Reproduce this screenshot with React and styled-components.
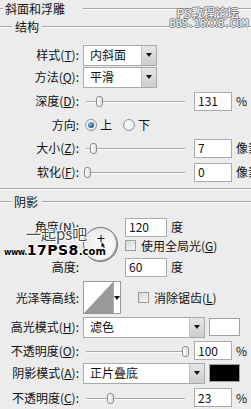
import React from 'react';
import styled, { createGlobalStyle } from 'styled-components';

const Global = createGlobalStyle`
  *, *::before, *::after { box-sizing: border-box; }
  html, body { margin: 0; padding: 0; background: #ececec; }
  body { width: 251px; height: 409px; overflow: hidden; }
  #root { width: 251px; height: 409px; }
`;

const Panel = styled.div`
  position: relative;
  width: 251px;
  height: 409px;
  overflow: hidden;
  background: #ececec;
  font-family: "Noto Sans CJK SC", "Noto Sans", sans-serif;
  font-size: 12px;
  color: #111;
  display: flex;
  flex-direction: column;
`;

const Header = styled.div`
  display: flex;
  align-items: center;
  flex: none;
  height: ${p => p.$h}px;
  margin-top: ${p => p.$mt || 0}px;
`;

const Rule = styled.div`
  height: 2px;
  border-top: 1px solid #a6a6a6;
  border-bottom: 1px solid #fbfbfb;
  flex: ${p => (p.$w ? 'none' : '1')};
  width: ${p => (p.$w ? `${p.$w}px` : 'auto')};
`;

const HeaderText = styled.span`
  padding: 0 ${p => p.$pr}px 0 ${p => p.$pl}px;
  line-height: 1;
  white-space: nowrap;
`;

const Separator = styled.div`
  flex: none;
  margin-top: 4px;
  height: 2px;
  border-top: 1px solid #a3a3a3;
  border-bottom: 1px solid #fbfbfb;
`;

const Row = styled.div`
  display: flex;
  align-items: center;
  flex: none;
  height: ${p => p.$h}px;
  margin-top: ${p => p.$mt || 0}px;
`;

const Label = styled.span`
  flex: none;
  width: 83px;
  padding-right: 4px;
  text-align: right;
  white-space: nowrap;
  line-height: 1;
`;

const Select = styled.div`
  flex: none;
  display: flex;
  width: ${p => p.$w}px;
  height: 21px;
  border: 1px solid #a9a9a9;
  background: #fff;
`;

const SelectText = styled.span`
  flex: 1;
  display: flex;
  align-items: center;
  padding-left: 6px;
  line-height: 1;
`;

const SelectButton = styled.span`
  flex: none;
  width: 15px;
  display: flex;
  align-items: center;
  justify-content: center;
  border-left: 1px solid #c2c2c2;
  background: linear-gradient(#e6e6e6, #cdcdcd);
  &::after {
    content: '';
    border-left: 3px solid transparent;
    border-right: 3px solid transparent;
    border-top: 4px solid #111;
  }
`;

const Track = styled.div`
  position: relative;
  flex: none;
  width: 104px;
  height: 12px;
  &::before {
    content: '';
    position: absolute;
    left: 3px;
    right: 2px;
    top: 6px;
    height: 2px;
    border-top: 1px solid #a9a9a9;
    border-bottom: 1px solid #fdfdfd;
  }
`;

const Thumb = styled.span`
  position: absolute;
  top: 1px;
  width: 7px;
  height: 11px;
  border: 1px solid #8c8c8c;
  border-radius: 3px;
  background: linear-gradient(90deg, #ffffff, #dedede);
`;

const NumBox = styled.div`
  flex: none;
  width: ${p => p.$w}px;
  height: 19px;
  margin-left: ${p => p.$ml || 0}px;
  border: 1px solid #ababab;
  background: #fff;
  padding-left: 3px;
  display: flex;
  align-items: center;
  line-height: 1;
`;

const Unit = styled.span`
  flex: none;
  margin-left: 4px;
  white-space: nowrap;
  line-height: 1;
`;

const Radio = styled.span`
  flex: none;
  position: relative;
  width: 12px;
  height: 12px;
  margin-left: ${p => p.$ml}px;
  border-radius: 50%;
  border: 1px solid #8795a3;
  background: radial-gradient(circle at 35% 35%, #ffffff, #dfe3e8);
  &::after {
    content: '';
    display: ${p => (p.$on ? 'block' : 'none')};
    position: absolute;
    left: 2px;
    top: 2px;
    width: 6px;
    height: 6px;
    border-radius: 50%;
    background: radial-gradient(circle at 35% 35%, #9cc3ea, #2a5f98 60%, #183f6c);
  }
`;

const RadioText = styled.span`
  margin-left: 3px;
  line-height: 1;
`;

const AngleGrid = styled.div`
  flex: none;
  display: grid;
  margin-top: 7px;
  grid-template-columns: 83px 42px auto;
  grid-template-rows: 20px 17px 26px;
  align-items: center;
`;

const GridLabel = styled(Label)`
  grid-column: 1;
  grid-row: ${p => p.$row};
`;

const GridCell = styled.div`
  grid-column: 3;
  grid-row: ${p => p.$row};
  display: flex;
  align-items: center;
`;

const Dial = styled.div`
  grid-column: 2;
  grid-row: 1 / 4;
  align-self: start;
  margin-top: 10px;
  position: relative;
  width: 35px;
  height: 35px;
  border-radius: 50%;
  border: 1px solid #6f6f6f;
  box-shadow: inset -1px -1px 0 #9a9a9a;
  background: radial-gradient(circle at 60% 65%, #ffffff, #ececec 70%, #dcdcdc);
`;

const Cursor = styled.svg`
  position: absolute;
  left: 13px;
  top: 7px;
`;

const Check = styled.span`
  flex: none;
  width: 11px;
  height: 11px;
  margin-left: ${p => p.$ml || 0}px;
  border: 1px solid #9c9c9c;
  background: linear-gradient(135deg, #d6d6d6, #f7f7f7);
`;

const CheckText = styled.span`
  margin-left: 5px;
  white-space: nowrap;
  line-height: 1;
`;

const Contour = styled.div`
  flex: none;
  display: flex;
  width: 38px;
  height: 33px;
  border: 1px solid #9a9a9a;
  background: #fff;
`;

const ContourPreview = styled.svg`
  flex: none;
  display: block;
`;

const ContourArrow = styled.span`
  flex: 1;
  display: flex;
  align-items: center;
  justify-content: center;
  border-left: 1px solid #b0b0b0;
  &::after {
    content: '';
    border-left: 3px solid transparent;
    border-right: 3px solid transparent;
    border-top: 4px solid #111;
  }
`;

const Swatch = styled.div`
  flex: none;
  width: 31px;
  height: 18px;
  margin-left: 4px;
  border: 1px solid #a0a0a0;
  background: ${p => p.$color};
`;

const WatermarkTop = styled.div`
  position: absolute;
  left: 164px;
  top: 6px;
  width: 84px;
  display: flex;
  flex-direction: column;
  align-items: flex-end;
  color: #fff;
  line-height: 1;
  text-shadow: 1px 0 0 #7a7a7a, -1px 0 0 #7a7a7a, 0 1px 0 #7a7a7a, 0 -1px 0 #7a7a7a;
`;

const WmCn = styled.span`
  font-size: 12px;
  line-height: 13px;
  margin-right: 9px;
`;

const WmEn = styled.span`
  font-family: "DejaVu Sans Mono", monospace;
  font-size: 10px;
  line-height: 10px;
`;

const WatermarkLeft = styled.div`
  position: absolute;
  left: 4px;
  top: 226px;
  display: flex;
  flex-direction: column;
  align-items: flex-start;
  line-height: 1;
  pointer-events: none;
`;

const WmLine1 = styled.span`
  margin-left: 22px;
  font-size: 15px;
  color: #4a4a4a;
  text-shadow: 1px 0 0 #fff, -1px 0 0 #fff, 0 1px 0 #fff, 0 -1px 0 #fff;
`;

const WmLine2 = styled.span`
  margin-top: 2px;
  font-family: "DejaVu Sans", sans-serif;
  font-weight: 900;
  color: #000;
  white-space: nowrap;
  text-shadow: 1px 0 0 #fff, -1px 0 0 #fff, 0 1px 0 #fff, 0 -1px 0 #fff;
`;

const WmSmall = styled.span`
  font-size: ${p => p.$s}px;
  letter-spacing: ${p => p.$ls || 0}px;
`;

const trackStart = 83;
const thumbLeft = center => center - trackStart - 3.5;

function Slider({ center }) {
  return (
    <Track>
      <Thumb style={{ left: `${thumbLeft(center)}px` }} />
    </Track>
  );
}

export default function App() {
  return (
    <>
      <Global />
      <Panel>
        <Header $h={18}>
          <Rule $w={3} />
          <HeaderText $pl={2} $pr={18}>斜面和浮雕</HeaderText>
          <Rule />
        </Header>
        <Header $h={18}>
          <Rule $w={12} />
          <HeaderText $pl={3} $pr={3}>结构</HeaderText>
          <Rule />
        </Header>

        <Row $h={22} $mt={8}>
          <Label>样式(<u>T</u>):</Label>
          <Select $w={74}>
            <SelectText>内斜面</SelectText>
            <SelectButton />
          </Select>
        </Row>
        <Row $h={22}>
          <Label>方法(<u>Q</u>):</Label>
          <Select $w={74}>
            <SelectText>平滑</SelectText>
            <SelectButton />
          </Select>
        </Row>
        <Row $h={26}>
          <Label>深度(<u>D</u>):</Label>
          <Slider center={99} />
          <NumBox $w={38} $ml={7}>131</NumBox>
          <Unit>%</Unit>
        </Row>
        <Row $h={22}>
          <Label>方向:</Label>
          <Radio $on $ml={2} />
          <RadioText>上</RadioText>
          <Radio $ml={11} />
          <RadioText>下</RadioText>
        </Row>
        <Row $h={24}>
          <Label>大小(<u>Z</u>):</Label>
          <Slider center={93} />
          <NumBox $w={38} $ml={7}>7</NumBox>
          <Unit>像素</Unit>
        </Row>
        <Row $h={24}>
          <Label>软化(<u>F</u>):</Label>
          <Slider center={87} />
          <NumBox $w={38} $ml={7}>0</NumBox>
          <Unit>像素</Unit>
        </Row>

        <Separator />

        <Header $h={16} $mt={4}>
          <Rule $w={12} />
          <HeaderText $pl={2} $pr={4}>阴影</HeaderText>
          <Rule />
        </Header>

        <AngleGrid>
          <GridLabel $row={1}>角度(<u>N</u>):</GridLabel>
          <Dial>
            <Cursor width="9" height="13" viewBox="0 0 9 13">
              <path d="M4 0v7M0.5 3.5h7" stroke="#111" strokeWidth="1" fill="none" />
              <path d="M4.5 7l0 5.5 1.3-1.3 1.3 2.2 0.9-0.5-1.3-2.2H8z" fill="#111" />
            </Cursor>
          </Dial>
          <GridCell $row={1}>
            <NumBox $w={42}>120</NumBox>
            <Unit>度</Unit>
          </GridCell>
          <GridCell $row={2}>
            <Check />
            <CheckText>使用全局光(<u>G</u>)</CheckText>
          </GridCell>
          <GridLabel $row={3}>高度:</GridLabel>
          <GridCell $row={3}>
            <NumBox $w={42}>60</NumBox>
            <Unit>度</Unit>
          </GridCell>
        </AngleGrid>

        <Row $h={35}>
          <Label>光泽等高线:</Label>
          <Contour>
            <ContourPreview width="29" height="31" viewBox="0 0 29 31">
              <polygon points="0,31 29,0 29,31" fill="#9a9a9a" />
            </ContourPreview>
            <ContourArrow />
          </Contour>
          <Check $ml={17} />
          <CheckText>消除锯齿(<u>L</u>)</CheckText>
        </Row>

        <Row $h={24}>
          <Label>高光模式(<u>H</u>):</Label>
          <Select $w={122}>
            <SelectText>滤色</SelectText>
            <SelectButton />
          </Select>
          <Swatch $color="#ffffff" />
        </Row>
        <Row $h={23}>
          <Label>不透明度(<u>O</u>):</Label>
          <Slider center={185} />
          <NumBox $w={38} $ml={7}>100</NumBox>
          <Unit>%</Unit>
        </Row>
        <Row $h={22}>
          <Label>阴影模式(<u>A</u>):</Label>
          <Select $w={122}>
            <SelectText>正片叠底</SelectText>
            <SelectButton />
          </Select>
          <Swatch $color="#000000" />
        </Row>
        <Row $h={27}>
          <Label>不透明度(<u>C</u>):</Label>
          <Slider center={110} />
          <NumBox $w={38} $ml={7}>23</NumBox>
          <Unit>%</Unit>
        </Row>

        <WatermarkTop>
          <WmCn>PS教程论坛</WmCn>
          <WmEn>BBS.16XX8.COM</WmEn>
        </WatermarkTop>

        <WatermarkLeft>
          <WmLine1>一起ps吧</WmLine1>
          <WmLine2>
            <WmSmall $s={8} $ls={-0.5}>www.</WmSmall>
            <WmSmall $s={14} $ls={0.5}>17PS8</WmSmall>
            <WmSmall $s={10}>.com</WmSmall>
          </WmLine2>
        </WatermarkLeft>
      </Panel>
    </>
  );
}
